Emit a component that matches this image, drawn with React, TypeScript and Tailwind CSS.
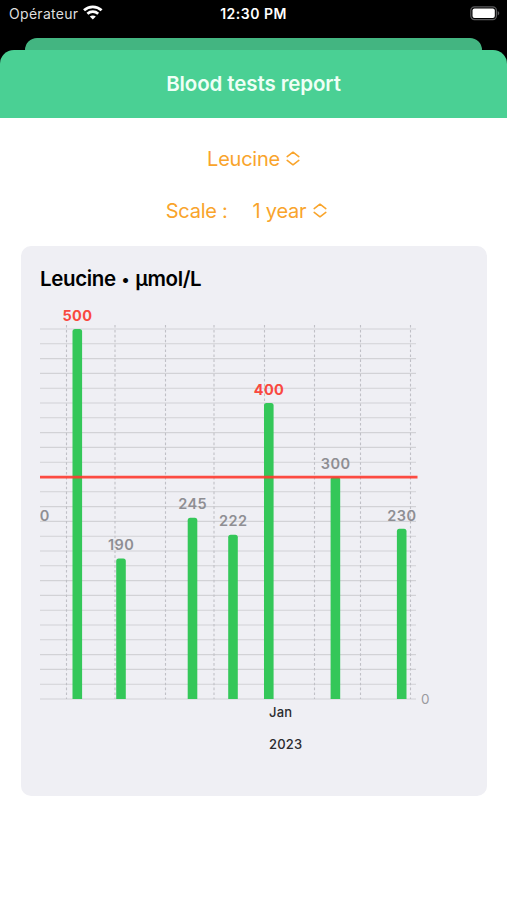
interface Sample {
  x: number;
  value: number;
}

const SAMPLES: Sample[] = [
  { x: 37.3, value: 500 },
  { x: 81, value: 190 },
  { x: 152.5, value: 245 },
  { x: 193, value: 222 },
  { x: 228.8, value: 400 },
  { x: 295.4, value: 300 },
  { x: 361.7, value: 230 },
];

const MONTHS = [26.5, 75, 125.5, 174, 224.5, 274.5, 320.5, 370.5];

const LIMIT = 300;
const BASE = 399;
const BAR_WIDTH = 9.6;

const toY = (value: number) => BASE - value * 0.74;

function WifiIcon() {
  return (
    <svg width="20" height="15" viewBox="0 0 20 15" fill="none" stroke="white" strokeWidth="2.7">
      <path d="M1 5.3C6 .6 13.6.6 18.6 5.3" />
      <path d="M4.4 8.8C7.5 6 12.1 6 15.2 8.8" />
      <path d="M9.8 14.6 6.8 11.6C8.5 10.1 11.1 10.1 12.8 11.6Z" fill="white" stroke="none" />
    </svg>
  );
}

function BatteryIcon() {
  return (
    <svg width="30" height="15" viewBox="0 0 30 15">
      <rect x="0.8" y="0.8" width="25.6" height="12.8" rx="3.6" fill="none" stroke="#5b5b5d" strokeWidth="1.2" />
      <rect x="2.5" y="2.5" width="22.3" height="9.4" rx="2" fill="white" />
      <path d="M27.7 5V9.5C29.7 8.7 29.7 5.8 27.7 5Z" fill="#5b5b5d" />
    </svg>
  );
}

function SortIcon() {
  return (
    <svg
      width="14"
      height="16"
      viewBox="0 0 14 16"
      fill="none"
      stroke="currentColor"
      strokeWidth="1.6"
      strokeLinecap="round"
      strokeLinejoin="round"
    >
      <path d="M1.2 5.6 7 1.2 12.8 5.6" />
      <path d="M1.2 9.4 7 13.8 12.8 9.4" />
    </svg>
  );
}

function BarChart() {
  return (
    <svg
      width="400"
      height="460"
      viewBox="0 0 400 460"
      className="block font-['Inter',sans-serif]"
    >
      {Array.from({ length: 26 }, (_, i) => (
        <line key={i} x1="0" x2="376" y1={toY(i * 20)} y2={toY(i * 20)} stroke="#d2d2d6" strokeWidth="1.1" />
      ))}
      {MONTHS.map((x) => (
        <line key={x} x1={x} x2={x} y1="25" y2="399" stroke="#c0c0c6" strokeWidth="1.1" strokeDasharray="2.6 2.3" />
      ))}

      {/* Bars, rounded on top only */}
      {SAMPLES.map(({ x, value }) => {
        const left = x - BAR_WIDTH / 2;
        const top = toY(value);
        return (
          <path
            key={x}
            d={`M${left} ${BASE}V${top + 2.5}q0 -2.5 2.5 -2.5h${BAR_WIDTH - 5}q2.5 0 2.5 2.5V${BASE}Z`}
            fill="#34c759"
          />
        );
      })}
      <line x1="0" x2="377.5" y1={toY(LIMIT) + 0.2} y2={toY(LIMIT) + 0.2} stroke="#ff3b30" strokeOpacity="0.9" strokeWidth="2.8" />

      {SAMPLES.map(({ x, value }) => (
        <text
          key={x}
          x={x + 0.2}
          y={toY(value) - 8.3}
          textAnchor="middle"
          fontSize="14.5"
          fontWeight={value > LIMIT ? 700 : 600}
          letterSpacing="0.45"
          fill={value > LIMIT ? "#f9493f" : "#8e8e93"}
        >
          {value}
        </text>
      ))}
      <text x="-0.3" y="221" fontSize="14.5" fontWeight="600" fill="#8e8e93">0</text>
      <text x="381" y="404" fontSize="13.5" fill="#9a9a9f">0</text>
      <text x="229" y="417" fontSize="13" fontWeight="500" letterSpacing="0.2" fill="#2b2b2e">Jan</text>
      <text x="229" y="448.5" fontSize="13" fontWeight="500" letterSpacing="0.2" fill="#2b2b2e">2023</text>
    </svg>
  );
}

export default function App() {
  return (
    <div className="flex h-[900px] w-[507px] flex-col overflow-hidden bg-white font-['Inter',sans-serif]">
      <div className="bg-black">
        {/* Status bar */}
        <div className="grid h-[38px] grid-cols-3 items-start text-white">
          <div className="flex items-start pt-1 pl-[9px]">
            <span className="text-[14px] leading-5 tracking-[0.3px] text-[#dedede]">Opérateur</span>
            <span className="ml-[5px] pt-px">
              <WifiIcon />
            </span>
          </div>
          <div className="pt-1 text-center text-[14px] leading-5 font-semibold tracking-[0.5px] whitespace-nowrap">
            12:30 PM
          </div>
          <div className="flex justify-end pt-1.5 pr-[7px]">
            <BatteryIcon />
          </div>
        </div>

        {/* Sheet behind the current one */}
        <div className="mx-[25px] h-3 rounded-t-[12px] bg-[#43b581]" />
        <div className="flex h-[68px] items-center justify-center rounded-t-[14px] bg-[#4ad094]">
          <h1 className="text-[20.5px] font-semibold tracking-[-0.1px] text-[#effff6]">
            Blood tests report
          </h1>
        </div>
      </div>

      <div className="flex flex-col items-center text-[20px] leading-7 tracking-[-0.25px] text-[#f9a42b]">
        <button className="mt-[27px] flex items-center gap-1.5">
          Leucine
          <SortIcon />
        </button>
        <div className="mt-6 mr-[14px] flex items-center">
          <span>Scale :</span>
          <button className="ml-[25px] flex items-center gap-[7px]">
            1 year
            <SortIcon />
          </button>
        </div>
      </div>

      <div className="mr-5 ml-[21px] mt-[21px] h-[550px] rounded-[10px] bg-[#efeff4] pr-5 pl-[19px] pt-[19px]">
        <h2 className="mb-[7px] h-7 text-[20.5px] leading-7 font-semibold tracking-[-0.35px] text-black">
          Leucine <span className="inline-block -translate-y-px px-px text-[16px] leading-4">•</span> µmol/L
        </h2>
        <BarChart />
      </div>
    </div>
  );
}
